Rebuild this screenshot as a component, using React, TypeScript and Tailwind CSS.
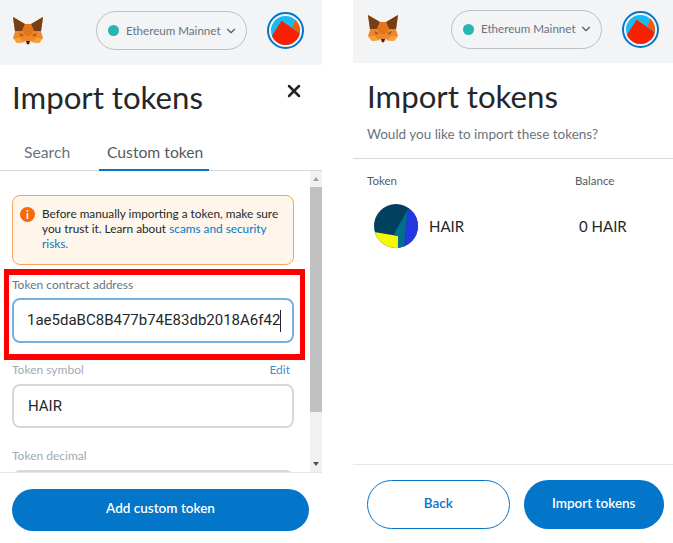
import React from 'react';
import { ChevronDown, X } from 'lucide-react';

function Fox() {
  return (
    <svg viewBox="0 0 32 30" className="h-[30px] w-[32px] shrink-0">
      <path d="M1 1 L13 8 L19 8 L31 1 L29 16 L31 22 L27 27 L19 26 L16 29 L13 26 L5 27 L1 22 L3 16 Z" fill="#f0852a" />
      <path d="M1 1 L13 8 L10 15 L3 15 Z" fill="#763d16" />
      <path d="M31 1 L19 8 L22 15 L29 15 Z" fill="#763d16" />
      <path d="M10 15 L13 8 L19 8 L22 15 L18 20 L14 20 Z" fill="#e2761b" />
      <path d="M7 17 L12 19 L9 21 Z" fill="#a8602a" />
      <path d="M25 17 L20 19 L23 21 Z" fill="#a8602a" />
      <path d="M12 25 L20 25 L18 28 L14 28 Z" fill="#e8dcd0" />
      <path d="M14 25 L18 25 L17 28 L15 28 Z" fill="#2b2622" />
      <path d="M1 22 L5 27 L12 26 L8 22 Z" fill="#f6a03c" />
      <path d="M31 22 L27 27 L20 26 L24 22 Z" fill="#f6a03c" />
    </svg>
  );
}

function Avatar() {
  return (
    <div className="ml-[20px] h-[37px] w-[37px] shrink-0 rounded-full border-2 border-[#0376c9] p-[2px]">
      <svg viewBox="0 0 30 30" className="h-full w-full rounded-full">
        <rect width="30" height="30" fill="#1cb8f0" />
        <path d="M0 22 L11 5 L30 18 L30 30 L0 30 Z" fill="#f91f01" />
        <path d="M22 11 L26 3 L30 8 L30 18 Z" fill="#f85b00" />
      </svg>
    </div>
  );
}

function TokenIcon() {
  return (
    <svg viewBox="0 0 44 44" className="h-[44px] w-[44px] shrink-0 rounded-full">
      <rect width="44" height="44" fill="#033f5f" />
      <path d="M34 5 L20 30 L24 32 L24 44 L30 44 Z" fill="#016e8d" />
      <path d="M34 5 L44 10 L44 44 L30 44 Z" fill="#2338e0" />
      <path d="M0 28 L24 32 L24 44 L0 44 Z" fill="#f6fa00" />
    </svg>
  );
}

function Header() {
  return (
    <div className="flex items-center">
      <Fox />
      <div className="ml-[52px] flex h-[39px] w-[151px] shrink-0 items-center rounded-full border border-[#bbc0c5] pl-[11px] pr-2">
        <span className="h-[11px] w-[11px] shrink-0 rounded-full bg-[#29b6af]" />
        <span className="ml-[7px] whitespace-nowrap text-[11.6px] text-[#6a737d]">Ethereum Mainnet</span>
        <ChevronDown className="ml-auto h-[14px] w-[14px] shrink-0 text-[#535a61]" />
      </div>
      <Avatar />
    </div>
  );
}

function Field({ label, value, right }: { label: string; value: string; right?: string }) {
  return (
    <div>
      <div className="flex h-[16px] items-center justify-between pr-[4px] text-[12px]">
        <span className="text-[#a3a9af]">{label}</span>
        {right && <span className="text-[#3f8fcf]">{right}</span>}
      </div>
      <div className="mt-[6px] flex h-[44px] items-center rounded-[8px] border-2 border-[#d6d9dc] px-[14px] font-['Roboto',sans-serif] text-[15px] text-[#24272a]">
        {value}
      </div>
    </div>
  );
}

function Scrollbar() {
  return (
    <div className="flex w-[12px] shrink-0 flex-col bg-[#f1f1f1]">
      <div className="flex h-[16px] items-center justify-center text-[#a3a3a3]">
        <span className="h-0 w-0 border-x-[3px] border-b-[4px] border-x-transparent border-b-current" />
      </div>
      <div className="h-[225px] bg-[#c1c1c1]" />
      <div className="flex flex-1 items-end justify-center pb-[6px] text-[#505050]">
        <span className="h-0 w-0 border-x-[3px] border-t-[4px] border-x-transparent border-t-current" />
      </div>
    </div>
  );
}

function LeftPanel() {
  return (
    <div className="flex h-[543px] w-[322px] shrink-0 flex-col bg-white">
      <div className="flex h-[65px] items-center bg-[#f2f4f6] pb-[4px] pl-3">
        <Header />
      </div>
      <div className="flex items-start justify-between pl-3 pr-[18px] pt-[13px]">
        <h1 className="text-[31.2px] leading-[38px] text-[#24272a]">Import tokens</h1>
        <X className="mt-[3px] h-[20px] w-[20px] text-[#24272a]" strokeWidth={3} />
      </div>
      <div className="mt-[22px] flex h-[33px] border-b border-[#d6d9dc] pl-3 text-[15.7px]">
        <div className="w-[87px] pl-3 pt-[3px] text-[#6a737d]">Search</div>
        <div className="-mb-px h-[33px] w-[110px] border-b-2 border-[#0376c9] pl-[8px] pt-[3px] text-[#535a61]">Custom token</div>
      </div>
      <div className="flex h-[302px] overflow-hidden border-b border-[#e4e6e8]">
        <div className="min-w-0 flex-1 pl-3 pr-4 pt-[24px]">
          <div className="flex h-[70px] gap-[7px] rounded-[8px] border border-[#f8a35b] bg-[#fef6ea] pl-[7px] pr-[12px] pt-[10px] text-[11.8px] leading-[15px] text-[#24272a]">
            <span className="mt-px flex h-[15px] w-[15px] shrink-0 items-center justify-center rounded-full bg-[#f66a0a] text-[11px] font-bold leading-none text-white">i</span>
            <p>
              Before manually importing a token, make sure you trust it. Learn about{' '}
              <span className="text-[#0376c9]">scams and security risks.</span>
            </p>
          </div>
          <div className="-ml-2 -mr-[11px] mt-[4px] border-x-[5px] border-y-[6px] border-[#fe0000] pl-[3px] pr-[6px] pb-[11px] pt-[2px]">
            <div className="h-[16px] text-[12px] leading-[16px] text-[#6a737d]">Token contract address</div>
            <div className="mt-[5px] flex h-[45px] items-center overflow-hidden rounded-[8px] border-2 border-[#73b2e0] pl-[13px] font-['Roboto',sans-serif] text-[15px] text-[#24272a]">
              1ae5daBC8B477b74E83db2018A6f42
              <span className="h-[22px] w-px bg-[#24272a]" />
            </div>
          </div>
          <div className="mt-[2px]">
            <Field label="Token symbol" value="HAIR" right="Edit" />
          </div>
          <div className="mt-[20px]">
            <Field label="Token decimal" value="" />
          </div>
        </div>
        <Scrollbar />
      </div>
      <div className="pl-3 pr-[13px] pt-[16px]">
        <button className="h-[42px] w-full rounded-full bg-[#0376c9] pb-[3px] text-[13.5px] font-semibold text-white">Add custom token</button>
      </div>
    </div>
  );
}

function RightPanel() {
  return (
    <div className="flex h-[543px] w-[320px] shrink-0 flex-col bg-white">
      <div className="flex h-[63px] items-center bg-[#f2f4f6] pb-[5px] pl-[14px]">
        <Header />
      </div>
      <div className="h-[96px] border-b border-[#d6d9dc] px-[14px] pt-[14px]">
        <h1 className="text-[31.2px] leading-[38px] text-[#24272a]">Import tokens</h1>
        <p className="mt-[10px] text-[13.5px] leading-[18px] text-[#6a737d]">Would you like to import these tokens?</p>
      </div>
      <div className="flex h-[306px] border-b border-[#e4e6e8] pl-[14px]">
        <div className="w-[208px]">
          <div className="mt-[15px] h-[14px] text-[11.5px] leading-[14px] text-[#535a61]">Token</div>
          <div className="mt-[16px] flex items-center pl-[7px]">
            <TokenIcon />
            <span className="ml-[11px] text-[15px] text-[#24272a]">HAIR</span>
          </div>
        </div>
        <div>
          <div className="mt-[15px] h-[14px] text-[11.5px] leading-[14px] text-[#535a61]">Balance</div>
          <div className="mt-[16px] flex h-[44px] items-center pl-[4px] text-[15px] text-[#24272a]">0 HAIR</div>
        </div>
      </div>
      <div className="flex gap-[14px] pl-[14px] pr-[9px] pt-[15px]">
        <button className="h-[49px] flex-1 rounded-full border border-[#0376c9] pb-[3px] text-[13.5px] font-semibold text-[#0376c9]">Back</button>
        <button className="h-[49px] flex-1 rounded-full bg-[#0376c9] pb-[3px] text-[13.5px] font-semibold text-white">Import tokens</button>
      </div>
    </div>
  );
}

export default function App() {
  return (
    <div className="flex h-[543px] w-[673px] gap-[31px] overflow-hidden bg-white font-['Lato',sans-serif]">
      <LeftPanel />
      <RightPanel />
    </div>
  );
}
